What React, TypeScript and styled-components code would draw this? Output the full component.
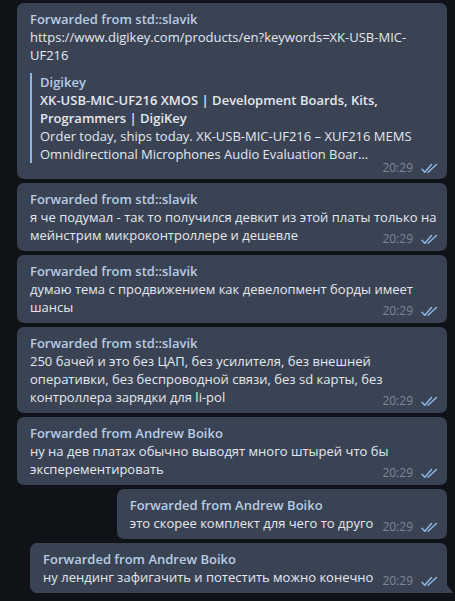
import styled, { createGlobalStyle } from 'styled-components';

const GlobalStyle = createGlobalStyle`
    html, body {
        margin: 0;
        padding: 0;
        background: #0f1318;
    }
    body {
        font-family: "Open Sans", "Noto Sans", sans-serif;
        -webkit-font-smoothing: antialiased;
    }
`;

type Message = {
    from: string;
    text: string;
    preview?: {
        site: string;
        title: string;
        text: string;
    };
};

const messages: Message[] = [
    {
        from: 'std::slavik',
        text: 'https://www.digikey.com/products/en?keywords=XK-USB-MIC-UF216',
        preview: {
            site: 'Digikey',
            title: 'XK-USB-MIC-UF216 XMOS | Development Boards, Kits, Programmers | DigiKey',
            text: 'Order today, ships today. XK-USB-MIC-UF216 – XUF216 MEMS Omnidirectional Microphones Audio Evaluation Boar…',
        },
    },
    {
        from: 'std::slavik',
        text: 'я че подумал - так то получился девкит из этой платы только на мейнстрим микроконтроллере и дешевле',
    },
    {
        from: 'std::slavik',
        text: 'думаю тема с продвижением как девелопмент борды имеет шансы',
    },
    {
        from: 'std::slavik',
        text: '250 бачей и это без ЦАП, без усилителя, без внешней оперативки, без беспроводной связи, без sd карты, без контроллера зарядки для li-pol',
    },
    {
        from: 'Andrew Boiko',
        text: 'ну на дев платах обычно выводят много штырей что бы эксперементировать',
    },
    {
        from: 'Andrew Boiko',
        text: 'это скорее комплект для чего то друго',
    },
    {
        from: 'Andrew Boiko',
        text: 'ну лендинг зафигачить и потестить можно конечно',
    },
];

const DoubleCheck = () => (
    <svg width="17" height="11" viewBox="0 0 17 11" fill="none">
        <path d="M1 6.2 L3.8 9.2 L10.5 1.5" stroke="#8db6e2" strokeWidth="1.5" strokeLinecap="round" strokeLinejoin="round" />
        <path d="M7 9.2 L15.5 1.5" stroke="#8db6e2" strokeWidth="1.5" strokeLinecap="round" />
    </svg>
);

const Time = () => (
    <>
        <span>20:29</span>
        <DoubleCheck />
    </>
);

export default function App() {
    return (
        <>
            <GlobalStyle />
            <Chat>
                {messages.map((m, i) => (
                    <Bubble key={i} $last={i === messages.length - 1}>
                        <Forwarded>Forwarded from {m.from}</Forwarded>
                        <Body>
                            {m.text}
                            {!m.preview && (
                                <InlineMeta>
                                    <Time />
                                </InlineMeta>
                            )}
                        </Body>
                        {m.preview && (
                            <>
                                <Preview>
                                    <PreviewSite>{m.preview.site}</PreviewSite>
                                    <PreviewTitle>{m.preview.title}</PreviewTitle>
                                    <Body>{m.preview.text}</Body>
                                </Preview>
                                <MetaRow>
                                    <Time />
                                </MetaRow>
                            </>
                        )}
                        {i === messages.length - 1 && <Tail />}
                    </Bubble>
                ))}
            </Chat>
        </>
    );
}

const Chat = styled.div`
    width: 455px;
    height: 601px;
    box-sizing: border-box;
    padding: 3px 8px 0 17px;
    display: flex;
    flex-direction: column;
    align-items: flex-end;
    gap: 4px;
    overflow: hidden;
`;

const Bubble = styled.div<{ $last: boolean }>`
    position: relative;
    max-width: 430px;
    box-sizing: border-box;
    padding: 7px 9px 7px 13px;
    background: #3a4353;
    border-radius: 7px;
    border-bottom-right-radius: ${(p) => (p.$last ? '0' : '7px')};
    color: #e4e8ee;
    font-size: 13px;
    line-height: 18px;
`;

const Forwarded = styled.div`
    font-weight: 600;
    color: #b8cce4;
`;

const Body = styled.div`
    white-space: pre-wrap;
`;

const InlineMeta = styled.span`
    float: right;
    position: relative;
    top: 4px;
    margin-left: 9px;
    display: flex;
    align-items: center;
    gap: 8px;
    font-size: 12px;
    color: #7d8796;
`;

const MetaRow = styled.div`
    margin: -2px 0 -3px;
    display: flex;
    justify-content: flex-end;
    align-items: center;
    gap: 8px;
    height: 14px;
    font-size: 12px;
    color: #7d8796;
`;

const Preview = styled.div`
    margin-top: 9px;
    padding-left: 8px;
    border-left: 2px solid #8db6e2;
`;

const PreviewSite = styled.div`
    font-weight: 600;
    color: #b8cce4;
`;

const PreviewTitle = styled.div`
    font-weight: 600;
    color: #e4e8ee;
`;

const Tail = styled.div`
    position: absolute;
    right: -6px;
    bottom: 0;
    width: 6px;
    height: 8px;
    background: #3a4353;
    clip-path: polygon(0 0, 0 100%, 100% 100%);
`;
